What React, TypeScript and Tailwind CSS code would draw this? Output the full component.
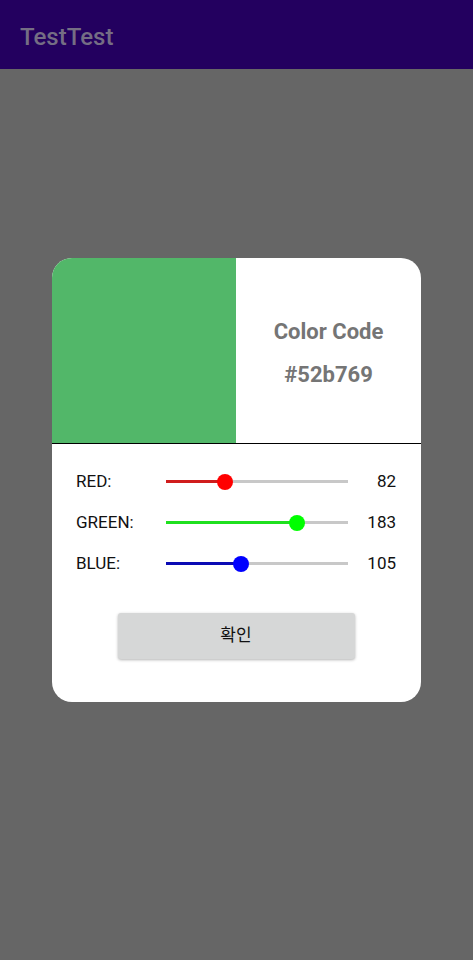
import React from "react";

type Channel = {
  label: string;
  value: number;
  track: string;
  thumb: string;
};

const channels: Channel[] = [
  { label: "RED:", value: 82, track: "bg-[#d01c1c]", thumb: "bg-[#ff0000]" },
  { label: "GREEN:", value: 183, track: "bg-[#1fe01f]", thumb: "bg-[#00ff00]" },
  { label: "BLUE:", value: 105, track: "bg-[#0a0ab4]", thumb: "bg-[#0000ff]" },
];

const SliderRow = ({ item }: { item: Channel }) => {
  const pct = (item.value / 255) * 100;
  return (
    <div className="flex h-[41px] items-center">
      <span className="w-[90px] text-[17px] text-[#111]">{item.label}</span>
      <div className="relative h-[16px] w-[182px]">
        <div className="absolute left-0 right-0 top-[6.5px] h-[3px] bg-[#c8c8c8]" />
        <div
          className={`absolute left-0 top-[6.5px] h-[3px] ${item.track}`}
          style={{ width: `${pct}%` }}
        />
        <div
          className={`absolute top-0 h-[16px] w-[16px] -translate-x-1/2 rounded-full ${item.thumb}`}
          style={{ left: `${pct}%` }}
        />
      </div>
      <span className="flex-1 text-right text-[17px] text-[#111]">{item.value}</span>
    </div>
  );
};

export default function App() {
  return (
    <div
      className="flex min-h-[960px] flex-col bg-[#666666]"
      style={{ fontFamily: "Roboto, 'Noto Sans CJK KR', sans-serif" }}
    >
      <header className="flex h-[69px] items-center bg-[#23005f] px-5 pt-[4px]">
        <h1 className="text-[24px] font-medium text-[#756e84]">TestTest</h1>
      </header>

      <div className="px-[52px] pt-[189px]">
        <div className="overflow-hidden rounded-[20px] bg-white">
          <div className="flex h-[186px] border-b border-black">
            <div className="w-[184px] bg-[#52b769]" />
            <div className="flex flex-1 flex-col items-center justify-center gap-[10px] pt-[4px] text-[22px] font-bold text-[#757575]">
              <span>Color Code</span>
              <span>#52b769</span>
            </div>
          </div>

          <div className="flex flex-col pl-6 pr-[25px] pt-[17px] pb-[43px]">
            {channels.map((c) => (
              <SliderRow key={c.label} item={c} />
            ))}
            <div className="mt-[29px] flex justify-center">
              <button className="h-[46px] w-[237px] rounded-[3px] bg-[#d6d7d7] text-[17px] text-[#111] shadow-[0_1px_3px_rgba(0,0,0,0.3)]">
                확인
              </button>
            </div>
          </div>
        </div>
      </div>
    </div>
  );
}
